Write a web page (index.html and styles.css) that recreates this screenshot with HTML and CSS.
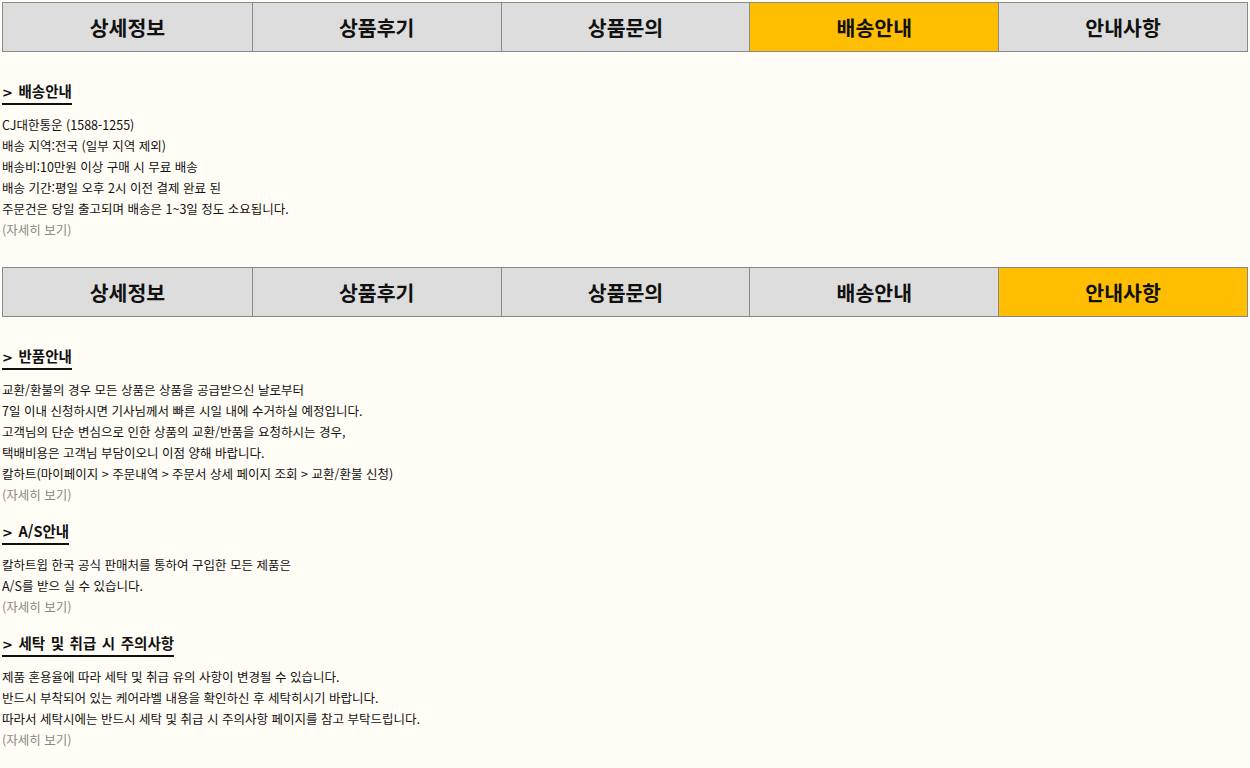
FILE: index.html
```html
<!DOCTYPE html>
<html lang="ko">
<head>
<meta charset="utf-8">
<link rel="stylesheet" href="styles.css">
</head>
<body>
<div class="tabs">
  <div class="tab">상세정보</div>
  <div class="tab">상품후기</div>
  <div class="tab">상품문의</div>
  <div class="tab active">배송안내</div>
  <div class="tab">안내사항</div>
</div>
<section class="info">
  <h3 class="title"><span class="chev">&gt;</span> 배송안내</h3>
  <p class="body">CJ대한통운 (1588-1255)<br>배송 지역:전국 (일부 지역 제외)<br>배송비:10만원 이상 구매 시 무료 배송<br>배송 기간:평일 오후 2시 이전 결제 완료 된<br>주문건은 당일 출고되며 배송은 1~3일 정도 소요됩니다.<br><span class="more">(자세히 보기)</span></p>
</section>
<div class="tabs">
  <div class="tab">상세정보</div>
  <div class="tab">상품후기</div>
  <div class="tab">상품문의</div>
  <div class="tab">배송안내</div>
  <div class="tab active">안내사항</div>
</div>
<section class="info">
  <h3 class="title"><span class="chev">&gt;</span> 반품안내</h3>
  <p class="body">교환/환불의 경우 모든 상품은 상품을 공급받으신 날로부터<br>7일 이내 신청하시면 기사님께서 빠른 시일 내에 수거하실 예정입니다.<br>고객님의 단순 변심으로 인한 상품의 교환/반품을 요청하시는 경우,<br>택배비용은 고객님 부담이오니 이점 양해 바랍니다.<br>칼하트(마이페이지 &gt; 주문내역 &gt; 주문서 상세 페이지 조회 &gt; 교환/환불 신청)<br><span class="more">(자세히 보기)</span></p>
  <h3 class="title"><span class="chev">&gt;</span> A/S안내</h3>
  <p class="body">칼하트윕 한국 공식 판매처를 통하여 구입한 모든 제품은<br>A/S를 받으 실 수 있습니다.<br><span class="more">(자세히 보기)</span></p>
  <h3 class="title"><span class="chev">&gt;</span> 세탁 및 취급 시 주의사항</h3>
  <p class="body">제품 혼용율에 따라 세탁 및 취급 유의 사항이 변경될 수 있습니다.<br>반드시 부착되어 있는 케어라벨 내용을 확인하신 후 세탁히시기 바랍니다.<br>따라서 세탁시에는 반드시 세탁 및 취급 시 주의사항 페이지를 참고 부탁드립니다.<br><span class="more">(자세히 보기)</span></p>
</section>
</body>
</html>
```
FILE: styles.css
```css
html, body {
  background: #fffdf6;
}
body {
  margin: 2px;
  font-family: "Noto Sans CJK KR", "Noto Sans", sans-serif;
  color: #111;
}
.tabs {
  display: grid;
  grid-template-columns: repeat(5, 1fr);
  border: 1px solid #8a8a8a;
  height: 48px;
}
.tab {
  background: #dddddd;
  border-left: 1px solid #8a8a8a;
  display: flex;
  align-items: center;
  justify-content: center;
  font-size: 20.5px;
  font-weight: bold;
  color: #111;
}
.tab:first-child {
  border-left: none;
}
.tab.active {
  background: #ffbf00;
}
.info {
  padding: 26px 0 27px;
}
.title {
  display: inline-block;
  margin: 0;
  font-size: 14.5px;
  line-height: 18px;
  font-weight: bold;
  word-spacing: 1.5px;
  padding-bottom: 1px;
  border-bottom: 2px solid #111;
}
.chev {
  font-family: "DejaVu Sans", sans-serif;
  font-weight: bold;
  font-size: 13px;
}
.body {
  margin: 9px 0 0;
  font-size: 12.5px;
  line-height: 21px;
}
.body + .title {
  margin-top: 17px;
}
.more {
  color: #888;
}
```
